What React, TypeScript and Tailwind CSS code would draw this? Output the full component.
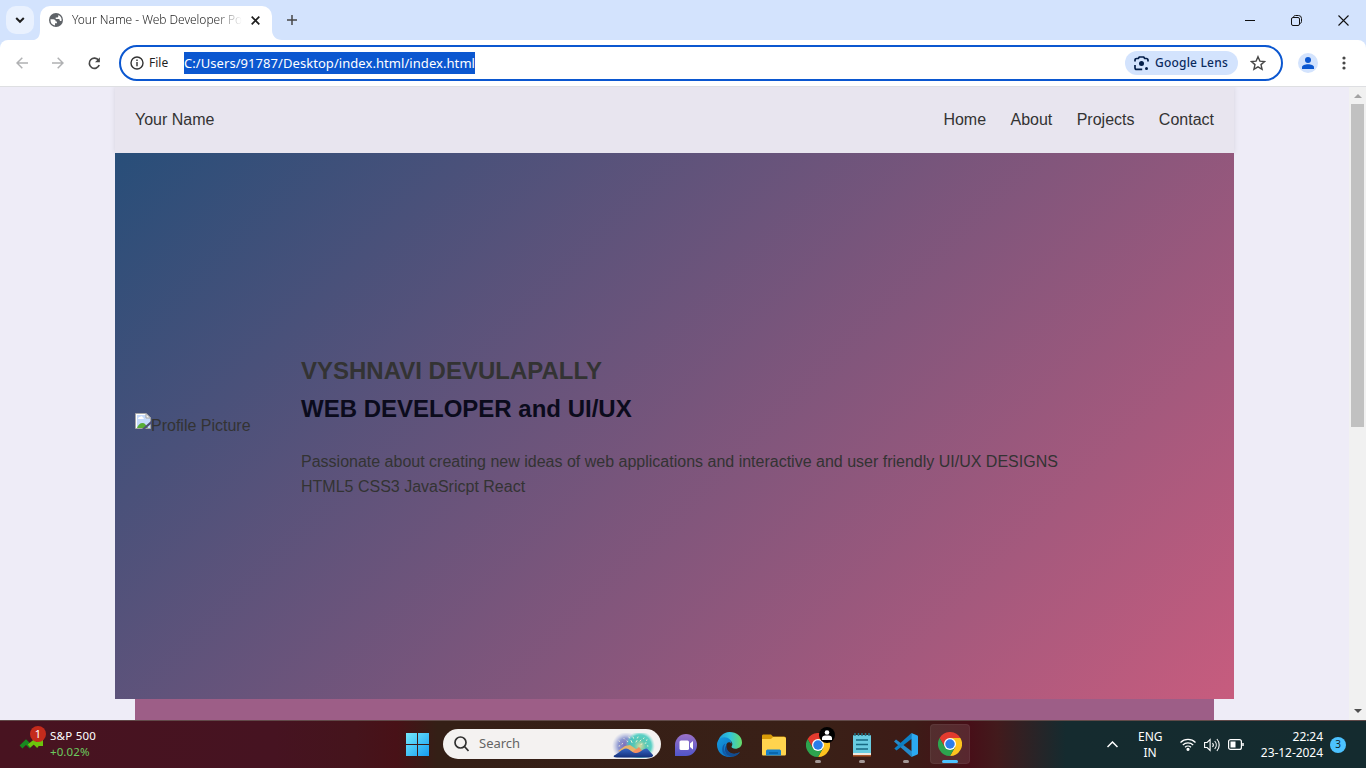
import React from "react";

const chromeFont = "font-['Noto_Sans','Open_Sans',sans-serif]";
const pageFont = "font-['Liberation_Sans',Arial,sans-serif]";

function Globe() {
  return (
    <svg width="14" height="14" viewBox="0 0 14 14" className="shrink-0">
      <circle cx="7" cy="7" r="7" fill="#5f6368" />
      <path d="M1.500 6.200h2.800c1.500 0 2.500 1 2.500 2.300h1.100v1.700H6v2.200A5.500 5.500 0 0 1 1.500 7z" fill="#fff" />
      <path d="M9.300 2v1.200c0 .8-.7 1.400-1.400 1.400H6.700v1.300h2.800c.8 0 1.300.6 1.300 1.300v.9h1.700A5.600 5.600 0 0 0 9.300 2z" fill="#fff" />
    </svg>
  );
}

function Chrome({ size = 24 }: { size?: number }) {
  return (
    <svg width={size} height={size} viewBox="0 0 48 48" className="shrink-0">
      <path d="M24 12h20.800A24 24 0 0 0 3.200 12l10.400 18z" fill="#e33b2e" />
      <path d="M34.400 30 24 48A24 24 0 0 0 44.800 12H24z" fill="#fcc31e" />
      <path d="M13.600 30 3.200 12A24 24 0 0 0 24 48l10.400-18z" fill="#2da44e" />
      <circle cx="24" cy="24" r="12" fill="#fff" />
      <circle cx="24" cy="24" r="9.500" fill="#2b7de9" />
    </svg>
  );
}

function TitleBar() {
  return (
    <div className="flex h-10 items-stretch bg-[#d3e3fd]">
      <div className="ml-1.5 mt-1.5 flex h-7 w-7 items-center justify-center rounded-[10px] bg-[#e9f1fe]">
        <svg width="10" height="8" viewBox="0 0 10 8" fill="none" stroke="#1f1f1f" strokeWidth="2"><path d="m1.200 2 3.800 3.800L8.800 2" /></svg>
      </div>
      <div className="flex w-1.5 items-end"><svg width="6" height="10" viewBox="0 0 6 10"><path d="M6 0c0 6-2 9-6 10h6z" fill="#fff" /></svg></div>
      <div className="mt-1.5 flex w-[232px] items-center rounded-t-[10px] bg-white pb-1.5 pl-[9px]">
        <Globe />
        <div className="ml-[9px] w-[170px] whitespace-nowrap bg-gradient-to-r from-[#1f1f1f] from-85% to-transparent bg-clip-text font-['Noto_Sans'] text-[12px] font-light leading-5 tracking-[-0.030px] text-transparent">
          Your Name - Web Developer Po
        </div>
        <svg className="ml-[9px]" width="9" height="9" viewBox="0 0 9 9" stroke="#1f1f1f" strokeWidth="1.700"><path d="m.7.7 7.600 7.600M8.300.7.700 8.300" /></svg>
      </div>
      <div className="flex w-2.5 items-end"><svg width="10" height="10" viewBox="0 0 10 10"><path d="M0 0c0 6 4 10 10 10H0z" fill="#fff" /></svg></div>
      <div className="ml-[5px] flex items-center"><svg width="10" height="10" viewBox="0 0 10 10" stroke="#474747" strokeWidth="1.500"><path d="M5 0v10M0 5h10" /></svg></div>
      <div className="ml-auto flex items-center gap-9 pr-[17px]">
        <svg width="10" height="10" viewBox="0 0 10 10" stroke="#111"><path d="M0 5.500h10" /></svg>
        <svg width="11" height="11" viewBox="0 0 11 11" fill="none" stroke="#111"><rect x=".5" y="2.500" width="8" height="8" rx="1.500" /><path d="M2.500 2.500C2.600 1 3.300.5 4.500.5h3A3 3 0 0 1 10.500 3.500v3c0 1.300-.7 1.900-2 2" /></svg>
        <svg width="11" height="11" viewBox="0 0 11 11" stroke="#111" strokeWidth="1.100"><path d="m.5.5 10 10m0-10-10 10" /></svg>
      </div>
    </div>
  );
}

function Toolbar() {
  return (
    <div className="bg-[#d3e3fd]">
      <div className="flex h-[47px] items-center rounded-t-[8px] border-b border-[#dedfe2] bg-white">
        <div className="ml-4 flex w-[103px] items-center">
          <svg width="12" height="12" viewBox="0 0 12 12" fill="none" stroke="#b0b1b3" strokeWidth="1.500"><path d="M12 6H1.200M6.300.7 1 6l5.300 5.300" /></svg>
          <svg className="ml-6" width="12" height="12" viewBox="0 0 12 12" fill="none" stroke="#b0b1b3" strokeWidth="1.500"><path d="M0 6h10.800M5.700.7 11 6l-5.300 5.300" /></svg>
          <svg className="ml-6" width="13" height="13" viewBox="0 0 13 13" fill="none" stroke="#474747" strokeWidth="1.700"><path d="M11.200 8A5.100 5.100 0 1 1 10.600 3.400" /><path d="M11.900.3v5H7z" fill="#474747" stroke="none" /></svg>
        </div>
        <div className="flex h-9 w-[1164px] items-center rounded-full border-2 border-[#0b57d0] pl-[9px]">
          <svg width="14" height="14" viewBox="0 0 14 14" fill="none" stroke="#333" strokeWidth="1.400"><circle cx="7" cy="7" r="6" /><path d="M7 6v4.300M7 3.500v1.500" /></svg>
          <span className="ml-[5px] w-[35px] text-[12px] text-[#1f1f1f]">File</span>
          <span className="h-[22px] w-[291px] whitespace-nowrap bg-[#0b57d0] font-['Noto_Sans'] text-[13px] leading-[22px] tracking-[0.060px] text-white">C:/Users/91787/Desktop/index.html/index.html</span>
          <div className="ml-auto flex h-6 w-[113px] items-center rounded-full bg-[#d3e3fd] pl-[9px] text-[12px] font-medium text-[#0a2a5e]">
            <svg width="15" height="15" viewBox="0 0 15 15" fill="none" stroke="#041e49" strokeWidth="1.700"><path d="M1 5.500V4.200c0-1 .7-1.700 1.700-1.700h1.600L5.300 1h4.400l1 1.500h1.600c1 0 1.700.7 1.700 1.700v1.300M1 9v2.700c0 1 .7 1.700 1.700 1.700h5.500" /><circle cx="7.500" cy="7.500" r="2.500" fill="#041e49" stroke="none" /><circle cx="12.500" cy="12.500" r="1.500" fill="#041e49" stroke="none" /></svg>
            <span className="ml-1.5 whitespace-nowrap tracking-[0.200px]">Google Lens</span>
          </div>
          <svg className="ml-3 mr-[15px]" width="16" height="16" viewBox="0 0 16 16" fill="none" stroke="#474747" strokeWidth="1.400"><path d="m8 1.700 1.900 4.400 4.700.4-3.600 3.100 1.100 4.700L8 11.800l-4.100 2.500L5 9.600 1.400 6.500l4.700-.4z" /></svg>
        </div>
        <div className="ml-[15px] flex h-5 w-5 items-center justify-center rounded-full bg-[#d3e3fd]"><svg width="12" height="12" viewBox="0 0 12 12" fill="#0b57d0"><circle cx="6" cy="3" r="3" /><path d="M0 12v-1.700C0 8.200 3 7.300 6 7.300s6 .9 6 3V12z" /></svg></div>
        <svg className="ml-6" width="4" height="14" viewBox="0 0 4 14" fill="#474747"><circle cx="2" cy="2" r="1.600" /><circle cx="2" cy="7" r="1.600" /><circle cx="2" cy="12" r="1.600" /></svg>
      </div>
    </div>
  );
}

function BrokenImage() {
  return (
    <svg width="16" height="16" viewBox="0 0 16 16" className="shrink-0">
      <path d="M.5 15.500V.5H11l4.500 4.500v10.500z" fill="#c4dafb" stroke="#a5a5a5" />
      <path d="M1 1h10v1H2v13H1z" fill="#fff" />
      <path d="M3 6c0-1.500 1-2 2-2 .5-1 2.500-1 2.800.6C9 4.700 9 6 8.500 6z" fill="#fff" />
      <path d="M2 15c1-3 3-5 5.500-5S11 12 13 15z" fill="#58ad36" />
      <path d="M11 .5V5h4.500z" fill="#f5f5f5" stroke="#a5a5a5" />
      <path d="M16 8v3l-6 5H7z" fill="#504f7a" />
    </svg>
  );
}

function WebPage() {
  return (
    <div className={`flex h-[633px] overflow-hidden bg-[#eeecf7] text-[16px] text-[#333] ${pageFont}`}>
      <div className="flex min-w-0 flex-1 flex-col items-center">
        <header className="flex h-[66px] w-[1119px] shrink-0 items-center justify-between bg-[#e8e5ef] px-5 shadow-[0_0_5px_rgba(0,0,0,0.100)]">
          <span>Your Name</span>
          <nav className="flex gap-[24.400px]"><a>Home</a><a>About</a><a>Projects</a><a>Contact</a></nav>
        </header>
        <main className="relative flex h-[546px] w-[1119px] shrink-0 items-center bg-[linear-gradient(135deg,#284e79,#c75c7e)] px-5">
          <div className="flex w-[166px] items-start pb-0.5"><BrokenImage /><span className="leading-[25px]">Profile Picture</span></div>
          <div className="pb-0.5">
            <h1 className="text-[24px] font-bold leading-[38px]">VYSHNAVI DEVULAPALLY</h1>
            <h2 className="text-[24px] font-bold leading-[38px] text-[#0b0b1c]">WEB DEVELOPER and UI/UX</h2>
            <p className="mt-[21px] leading-[25px]">Passionate about creating new ideas of web applications and interactive and user friendly UI/UX DESIGNS</p>
            <p className="leading-[25px]">HTML5 CSS3 JavaSricpt React</p>
          </div>
        </main>
        <div className="w-[1079px] flex-1 bg-[#9d5e87]" />
      </div>
      <div className="flex w-[17px] flex-col items-center bg-[#f1f1f1] pt-[7px]">
        <svg width="8" height="4" viewBox="0 0 8 4"><path d="M0 4 4 0l4 4z" fill="#a3a3a3" /></svg>
        <div className="mt-1.5 h-[323px] w-[13px] bg-[#c1c1c1]" />
        <svg className="mb-[7px] mt-auto" width="8" height="4" viewBox="0 0 8 4"><path d="m0 0 4 4 4-4z" fill="#505050" /></svg>
      </div>
    </div>
  );
}

function Bloom() {
  return (
    <svg width="44" height="25" viewBox="0 0 44 25">
      <defs>
        <radialGradient id="violet"><stop stopColor="#7965b8" /><stop offset=".55" stopColor="#8b95cf" /><stop offset="1" stopColor="#aab5df" stopOpacity="0" /></radialGradient>
        <radialGradient id="teal"><stop stopColor="#d9d99a" /><stop offset=".4" stopColor="#58c8b4" /><stop offset=".75" stopColor="#36c7ba" stopOpacity=".8" /><stop offset="1" stopColor="#83dfd1" stopOpacity="0" /></radialGradient>
        <linearGradient id="hills" x2="0" y2="1"><stop stopColor="#3766c4" /><stop offset="1" stopColor="#142f79" /></linearGradient>
      </defs>
      <circle cx="15" cy="13" r="14" fill="url(#violet)" /><circle cx="29" cy="13" r="15" fill="url(#teal)" />
      <path d="m7 18 7-5 5-1 9 6-8 4z" fill="#e6b36b" /><path d="m20 20 8-6 5 6z" fill="#f38e60" />
      <path d="M3 22.500c4-1.500 8-7 12-7 4 0 6 5 10 4.500 5 0 6-4.500 11-4.500l6 6.500c.5 1.700-2 2.500-5 2.500H6c-3 0-4-1-3-2z" fill="url(#hills)" />
      <path d="M8 8l.5.3M11 11l.6-.4M13 5.500l.5.5M16 8l.6.5M18 4l.5 1M20 7.500l1 2M22 4l.5 1.200M25 9l1-1.500M27 4l-.5 1M30 7l-1 1M33 5l-.6.5M36 7l-.6.3M35 10l-.8.2M37 13l-.7-.1M8 13l.7-.2M31 11l-1 .3" stroke="#faf6da" strokeWidth=".9" strokeLinecap="round" />
    </svg>
  );
}

function ChatIcon() {
  return (
    <svg width="24" height="24" viewBox="0 0 24 24"><defs><linearGradient id="chat" x2="0" y2="1"><stop stopColor="#9b72c8" /><stop offset="1" stopColor="#5055ca" /></linearGradient></defs><path d="M12 1a11 11 0 1 1 0 22H1V12A11 11 0 0 1 12 1z" fill="url(#chat)" /><rect x="5.500" y="7.500" width="9.500" height="9.500" rx="1.500" fill="#fff" /><path d="m16 10.500 3-2.500v8.500l-3-2.500z" fill="#fff" /></svg>
  );
}

function EdgeIcon() {
  return (
    <svg width="25" height="25" viewBox="0 0 24 24">
      <defs><linearGradient id="edgeTop"><stop stopColor="#2099d8" /><stop offset=".5" stopColor="#31c5dc" /><stop offset="1" stopColor="#68dc66" /></linearGradient><linearGradient id="edgeLow" x2="1" y2="1"><stop stopColor="#1699dd" /><stop offset="1" stopColor="#0868bc" /></linearGradient></defs>
      <path d="M1 11C1 5 6 0 12 0c7 0 12 4.500 12 10 0 4-3 6-6.500 6-2 0-4-.8-3.500-2 1.200-2 1-4-1-5.500C9 5.500 3 6.200 1 11z" fill="url(#edgeTop)" />
      <path d="M0 12c0-4 3-7 7-7 4.500 0 7 3 7 6.500-1-2-3.500-2-4.500-.5-1.500 2-1 5.500 1.500 8s7 3 11 .5C20 22 16 24 12 24 5 24 0 19 0 12z" fill="url(#edgeLow)" />
      <path d="M8 11c-3 5 0 12 6 12.800C8.500 24.500 5 21 5 17c0-3 1-5 3-6z" fill="#115ba8" />
      <path d="M10 11c-2 3-.5 7 3 9 3 1.600 6 .8 9-1-2 3.500-5 5-8.500 4.500C7 22.500 6 15 10 11z" fill="#124c91" />
    </svg>
  );
}

function FolderIcon() {
  return <svg width="24" height="24" viewBox="0 0 24 24"><path d="M0 3c0-1 .5-1.500 1.500-1.500H9l2 2h11c1 0 2 .7 2 2V12H0z" fill="#d99b08" /><path d="M0 6h9l2-2h11c1.300 0 2 .7 2 2v15c0 1-.7 1.500-1.500 1.500h-21C.6 22.500 0 22 0 21z" fill="#ffd44e" /><path d="M4 22.500V18c0-1 1-1.500 2-1.500h11c1 0 2 .5 2 1.500v4.500z" fill="#1680cc" /><path d="M7 19h9v2H7z" fill="#0967ac" /></svg>;
}

function NotepadIcon() {
  return <svg width="20" height="24" viewBox="0 0 20 24"><rect x="1" y="2" width="18" height="20" rx="1" fill="#69cce1" /><path d="M1 20h18v2H1z" fill="#eee8df" /><path d="M1 22h18v1.500H1z" fill="#ad5428" /><path d="M3 0v3m3.500-3v3M10 0v3m3.500-3v3M17 0v3" stroke="#257384" strokeWidth="1.500" /><path d="M4 7h12M4 11.500h12M4 16h12" stroke="#176a83" strokeWidth="1.500" /></svg>;
}

function CodeIcon() {
  return <svg width="24" height="24" viewBox="0 0 24 24"><path d="M18 18.500 2 6.500 0 8.500 17.500 24z" fill="#2489ca" /><path d="M18 5.500 2.500 17.500.3 15.500 17.500 0z" fill="#0d7fc4" /><path d="m17.500 0 6 2.500c.4.300.5.700.5 1.200v16.600c0 .5-.2.900-.6 1.100L17.500 24z" fill="#2ba9f2" /></svg>;
}

function Taskbar() {
  const app = "relative flex h-full w-11 items-center justify-center";
  return (
    <div className={`flex h-12 items-stretch border-t border-[#614a49] bg-[linear-gradient(90deg,#481320_0%,#461321_20%,#45141c_26%,#481117_29%,#341f16_32%,#3a2017_60%,#3d1b17_67%,#470f18_71%,#421a1c_73%,#152b2f_78%,#142b2f_100%)] text-[12px] text-white ${chromeFont}`}>
      <div className="flex w-[395px] pl-[19px]">
        <div className="relative h-full w-7"><svg className="mt-4" width="24" height="12" viewBox="0 0 24 12" fill="none" strokeWidth="4"><path d="m2 10 5-5 5 5" stroke="#188a20" /><path d="m10 9 5-4 3 3 4-5v6" stroke="#6cc40c" /></svg><span className="absolute left-[11px] top-[5px] h-4 w-4 rounded-full bg-[#c42b1c] text-center text-[11px] leading-4">1</span></div>
        <div className="ml-[3px] whitespace-nowrap pt-[7px] text-[11.500px] leading-4"><div className="tracking-[0.250px]">S&amp;P 500</div><div className="tracking-[0.100px] text-[#6ccb5f]">+0.02%</div></div>
      </div>
      <div className="flex w-11 items-center justify-center"><svg width="23" height="23" viewBox="0 0 23 23"><defs><linearGradient id="windows" x2="1" y2="1"><stop stopColor="#74e9fc" /><stop offset="1" stopColor="#159df2" /></linearGradient></defs><path d="M0 0h11v11H0zm12 0h11v11H12zM0 12h11v11H0zm12 0h11v11H12z" fill="url(#windows)" /></svg></div>
      <div className="ml-1 mt-2 flex h-[30px] w-[218px] items-center rounded-full bg-[#f4f2f1] pl-[11px] text-[#646464]"><svg width="15" height="16" viewBox="0 0 15 16" fill="none" stroke="#303030" strokeWidth="1.700"><circle cx="6.500" cy="6.500" r="5.500" /><path d="m10.500 10.500 4 4.500" /></svg><span className="ml-2.5 text-[13px]">Search</span><div className="ml-auto mr-1.5 pt-0.5"><Bloom /></div></div>
      <div className="ml-[2.500px] flex">
        <div className={app}><ChatIcon /></div><div className={app}><EdgeIcon /></div><div className={app}><FolderIcon /></div>
        <div className={app}><Chrome /><span className="absolute right-[5px] top-1.5 flex h-4 w-4 items-center justify-center rounded-full bg-black"><svg width="10" height="10" viewBox="0 0 10 10" fill="#fff"><circle cx="5" cy="2.500" r="2.300" /><path d="M0 10V8c0-2 2-2.500 5-2.500s5 .5 5 2.500v2z" /></svg></span><i className="absolute bottom-[5px] h-[3px] w-1.5 rounded-full bg-[#a39795]" /></div>
        <div className={app}><NotepadIcon /><i className="absolute bottom-[5px] h-[3px] w-1.5 rounded-full bg-[#a39795]" /></div>
        <div className={app}><CodeIcon /><i className="absolute bottom-[5px] h-[3px] w-1.5 rounded-full bg-[#a39795]" /></div>
        <div className="relative ml-0.5 mt-[3px] flex h-10 w-10 items-center justify-center rounded border border-white/5 bg-white/10"><Chrome /><i className="absolute bottom-0 h-[3px] w-4 rounded-full bg-[#4cc2ff]" /></div>
      </div>
      <div className="ml-auto flex items-center pr-5">
        <svg width="11" height="7" viewBox="0 0 11 7" fill="none" stroke="#fff" strokeWidth="1.500"><path d="m.5 6 5-5 5 5" /></svg>
        <div className="ml-5 w-6 text-center text-[12px] leading-4">ENG<br />IN</div>
        <svg className="ml-[18px]" width="16" height="13" viewBox="0 0 16 13" fill="none" stroke="#fff" strokeWidth="1.200"><path d="M.5 4.500a10.600 10.600 0 0 1 15 0M2.800 7a7.400 7.400 0 0 1 10.400 0M5 9.300a4.300 4.300 0 0 1 6 0" /><circle cx="8" cy="11.300" r="1" fill="#fff" /></svg>
        <svg className="ml-2" width="16" height="14" viewBox="0 0 16 14" fill="none" stroke="#fff" strokeWidth="1.100"><path d="M.6 4.500h2.500l3-3v11l-3-3H.6zM8.500 5a3 3 0 0 1 0 4M10.700 3a6 6 0 0 1 0 8M12.900 1a9 9 0 0 1 0 12" /></svg>
        <svg className="ml-2" width="16" height="11" viewBox="0 0 16 11" fill="none" stroke="#fff" strokeWidth="1.200"><rect x=".6" y=".6" width="12.800" height="9.800" rx="2" /><path d="M15 4v3" strokeWidth="1.500" /><path d="M2.500 2.500h5v6h-5z" fill="#fff" stroke="none" /></svg>
        <div className="ml-[15px] w-[64px] whitespace-nowrap text-right text-[12px] leading-4 tracking-[-0.050px]">22:24<br />23-12-2024</div>
        <div className="ml-[7px] flex h-4 w-4 items-center justify-center rounded-full bg-[#4cc2ff] text-[10px] text-[#10242a]">3</div>
      </div>
    </div>
  );
}

export default function App() {
  return <div className={`h-[768px] w-[1366px] overflow-hidden ${chromeFont}`}><TitleBar /><Toolbar /><WebPage /><Taskbar /></div>;
}
